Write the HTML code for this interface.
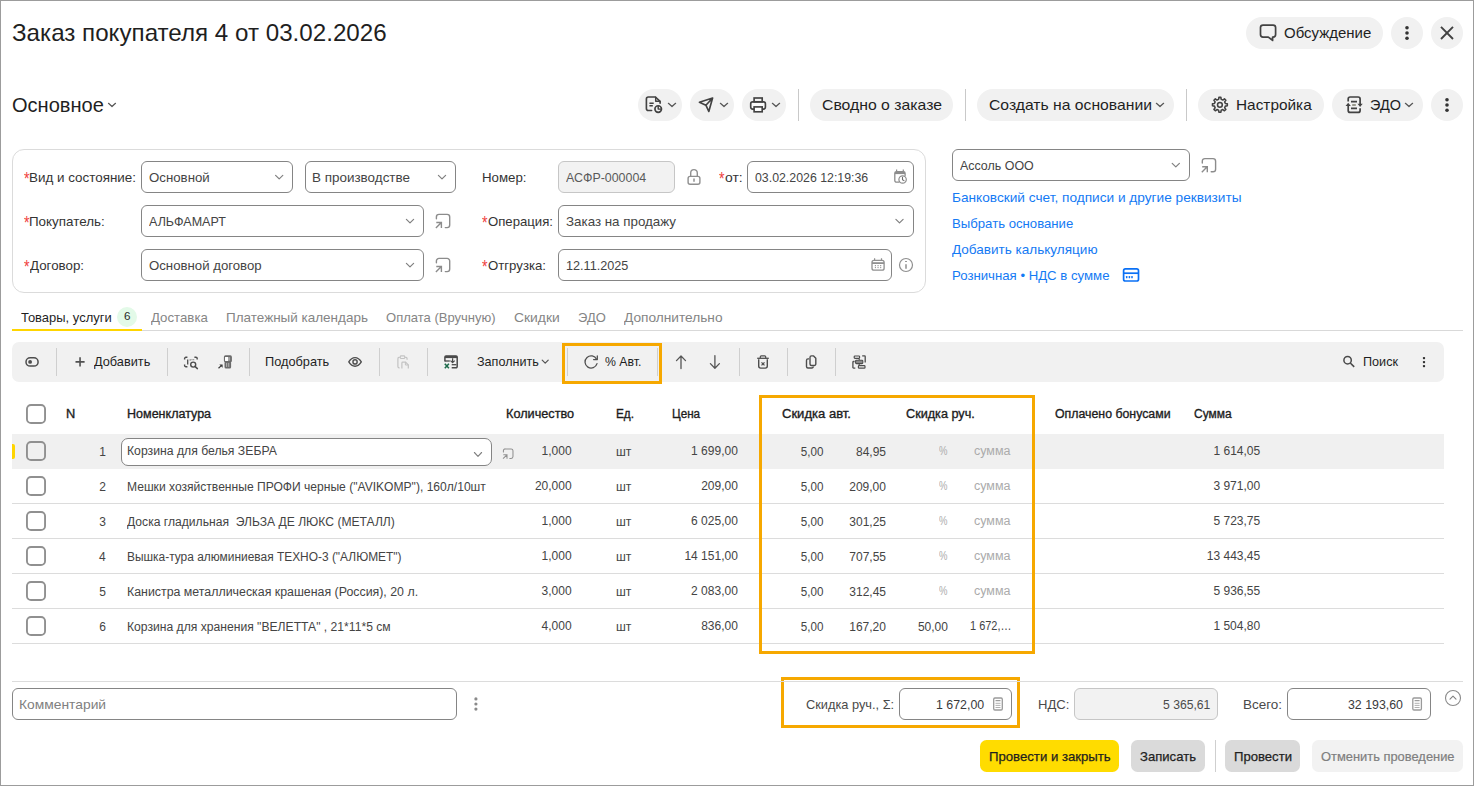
<!DOCTYPE html>
<html lang="ru"><head><meta charset="utf-8"><title>Заказ покупателя</title>
<style>
html,body{margin:0;padding:0;}
body{width:1474px;height:786px;position:relative;overflow:hidden;background:#fff;font-family:"Liberation Sans", sans-serif;}
.b{position:absolute;box-sizing:border-box;display:block;}
.t{position:absolute;white-space:pre;line-height:1;}
</style></head>
<body>
<div class="b" style="left:0px;top:0px;width:1474px;height:786px;border:1px solid #9c9c9c;"></div>
<div class="b" style="left:1246px;top:17px;width:137px;height:32px;background:#f1f1f1;border-radius:16px;"></div>
<div class="b" style="left:1391px;top:17px;width:32px;height:32px;background:#f1f1f1;border-radius:16px;"></div>
<div class="b" style="left:1431px;top:17px;width:32px;height:32px;background:#f1f1f1;border-radius:16px;"></div>
<div class="b" style="left:638px;top:89px;width:44px;height:32px;background:#f1f1f1;border-radius:16px;"></div>
<div class="b" style="left:690px;top:89px;width:44px;height:32px;background:#f1f1f1;border-radius:16px;"></div>
<div class="b" style="left:742px;top:89px;width:44px;height:32px;background:#f1f1f1;border-radius:16px;"></div>
<div class="b" style="left:810px;top:89px;width:143px;height:32px;background:#f1f1f1;border-radius:16px;"></div>
<div class="b" style="left:977px;top:89px;width:197px;height:32px;background:#f1f1f1;border-radius:16px;"></div>
<div class="b" style="left:1198px;top:89px;width:126px;height:32px;background:#f1f1f1;border-radius:16px;"></div>
<div class="b" style="left:1332px;top:89px;width:91px;height:32px;background:#f1f1f1;border-radius:16px;"></div>
<div class="b" style="left:1431px;top:89px;width:32px;height:32px;background:#f1f1f1;border-radius:16px;"></div>
<div class="b" style="left:798px;top:89px;width:1px;height:32px;background:#c9c9c9;"></div>
<div class="b" style="left:965px;top:89px;width:1px;height:32px;background:#c9c9c9;"></div>
<div class="b" style="left:1186px;top:89px;width:1px;height:32px;background:#c9c9c9;"></div>
<div class="b" style="left:12px;top:149px;width:914px;height:144px;border:1px solid #dbdbdb;border-radius:12px;"></div>
<div class="b" style="left:141px;top:161px;width:152px;height:32px;background:#fff;border:1px solid #858585;border-radius:6px;"></div>
<div class="b" style="left:305px;top:161px;width:151px;height:32px;background:#fff;border:1px solid #858585;border-radius:6px;"></div>
<div class="b" style="left:141px;top:205px;width:283px;height:32px;background:#fff;border:1px solid #858585;border-radius:6px;"></div>
<div class="b" style="left:141px;top:249px;width:283px;height:32px;background:#fff;border:1px solid #858585;border-radius:6px;"></div>
<div class="b" style="left:558px;top:161px;width:117px;height:32px;background:#f2f2f2;border:1px solid #c6c6c6;border-radius:6px;"></div>
<div class="b" style="left:747px;top:161px;width:167px;height:32px;background:#fff;border:1px solid #858585;border-radius:6px;"></div>
<div class="b" style="left:558px;top:205px;width:356px;height:32px;background:#fff;border:1px solid #858585;border-radius:6px;"></div>
<div class="b" style="left:558px;top:249px;width:334px;height:32px;background:#fff;border:1px solid #858585;border-radius:6px;"></div>
<div class="b" style="left:952px;top:149px;width:238px;height:32px;background:#fff;border:1px solid #858585;border-radius:6px;"></div>
<div class="b" style="left:12px;top:330px;width:1451px;height:1px;background:#d9d9d9;"></div>
<div class="b" style="left:12px;top:329px;width:130px;height:2px;background:#ffd500;"></div>
<div class="b" style="left:117px;top:307px;width:20px;height:20px;background:#e3fae8;border-radius:10px;"></div>
<div class="b" style="left:12px;top:342px;width:1432px;height:40px;background:#f1f1f1;border-radius:7px;"></div>
<div class="b" style="left:56px;top:348px;width:1px;height:28px;background:#cfcfcf;"></div>
<div class="b" style="left:167px;top:348px;width:1px;height:28px;background:#cfcfcf;"></div>
<div class="b" style="left:249px;top:348px;width:1px;height:28px;background:#cfcfcf;"></div>
<div class="b" style="left:379px;top:348px;width:1px;height:28px;background:#cfcfcf;"></div>
<div class="b" style="left:427px;top:348px;width:1px;height:28px;background:#cfcfcf;"></div>
<div class="b" style="left:567px;top:348px;width:1px;height:28px;background:#cfcfcf;"></div>
<div class="b" style="left:657px;top:348px;width:1px;height:28px;background:#cfcfcf;"></div>
<div class="b" style="left:739px;top:348px;width:1px;height:28px;background:#cfcfcf;"></div>
<div class="b" style="left:787px;top:348px;width:1px;height:28px;background:#cfcfcf;"></div>
<div class="b" style="left:835px;top:348px;width:1px;height:28px;background:#cfcfcf;"></div>
<div class="b" style="left:12px;top:434px;width:1432px;height:35px;background:#f0f0f0;"></div>
<div class="b" style="left:12px;top:444px;width:3px;height:15px;background:#ffd500;border-radius:0 2px 2px 0;"></div>
<div class="b" style="left:12px;top:503px;width:1432px;height:1px;background:#dcdcdc;"></div>
<div class="b" style="left:12px;top:538px;width:1432px;height:1px;background:#dcdcdc;"></div>
<div class="b" style="left:12px;top:573px;width:1432px;height:1px;background:#dcdcdc;"></div>
<div class="b" style="left:12px;top:608px;width:1432px;height:1px;background:#dcdcdc;"></div>
<div class="b" style="left:12px;top:643px;width:1432px;height:1px;background:#dcdcdc;"></div>
<div class="b" style="left:121px;top:438px;width:371px;height:28px;background:#fff;border:1px solid #858585;border-radius:7px;"></div>
<div class="b" style="left:562px;top:343px;width:100px;height:41px;border:3px solid #f6a800;"></div>
<div class="b" style="left:759px;top:395px;width:276px;height:259px;border:3px solid #f6a800;"></div>
<div class="b" style="left:781px;top:677px;width:239px;height:51px;border:3px solid #f6a800;"></div>
<div class="b" style="left:12px;top:681px;width:1451px;height:1px;background:#dcdcdc;"></div>
<div class="b" style="left:12px;top:688px;width:445px;height:32px;background:#fff;border:1px solid #858585;border-radius:6px;"></div>
<div class="b" style="left:899px;top:688px;width:113px;height:32px;background:#fff;border:1px solid #858585;border-radius:6px;"></div>
<div class="b" style="left:1074px;top:688px;width:144px;height:32px;background:#f2f2f2;border:1px solid #c6c6c6;border-radius:6px;"></div>
<div class="b" style="left:1287px;top:688px;width:144px;height:32px;background:#fff;border:1px solid #858585;border-radius:6px;"></div>
<div class="b" style="left:980px;top:740px;width:139px;height:32px;background:#ffdc00;border-radius:6.5px;"></div>
<div class="b" style="left:1131px;top:740px;width:74px;height:32px;background:#dadada;border-radius:6.5px;"></div>
<div class="b" style="left:1215px;top:740px;width:1px;height:32px;background:#cfcfcf;"></div>
<div class="b" style="left:1225px;top:740px;width:75px;height:32px;background:#dadada;border-radius:6.5px;"></div>
<div class="b" style="left:1312px;top:740px;width:151px;height:32px;background:#f2f2f2;border-radius:6.5px;"></div>
<svg class="b" style="left:0;top:0" width="1474" height="786" viewBox="0 0 1474 786" fill="none"><path d="M1263 25.1H1273.1A2.5 2.5 0 0 1 1275.6 27.6V34.6A2.5 2.5 0 0 1 1273.1 37.1H1272.6V40.4L1268.3 37.1H1263A2.5 2.5 0 0 1 1260.5 34.6V27.6A2.5 2.5 0 0 1 1263 25.1Z" stroke="#424242" stroke-width="1.7" fill="none" stroke-linecap="round" stroke-linejoin="round" /><circle cx="1407" cy="27.8" r="1.8" fill="#333"/><circle cx="1407" cy="33" r="1.8" fill="#333"/><circle cx="1407" cy="38.2" r="1.8" fill="#333"/><path d="M1441 26.9L1453 39M1453 26.9L1441 39" stroke="#424242" stroke-width="1.9" fill="none" stroke-linecap="butt" stroke-linejoin="round" /><path d="M651.6 110.5H648.4A2 2 0 0 1 646.4 108.5V99A2 2 0 0 1 648.4 97H655.4L660.1 101.3V103.2" stroke="#424242" stroke-width="1.65" fill="none" stroke-linecap="round" stroke-linejoin="round" /><path d="M655.7 97.3V101.3H659.8" stroke="#424242" stroke-width="1.45" fill="none" stroke-linecap="round" stroke-linejoin="round" /><path d="M649.4 103.3H653.7M649.4 105.7H652.8" stroke="#424242" stroke-width="1.55" fill="none" stroke-linecap="butt" stroke-linejoin="round" /><circle cx="658.2" cy="109.1" r="3.3" stroke="#424242" stroke-width="1.65" fill="none"/><path d="M658.2 106.5V109.1H660.8" stroke="#424242" stroke-width="1.45" fill="none" stroke-linecap="round" stroke-linejoin="round" /><path d="M668.4 103.30000000000001L672 106.5L675.6 103.30000000000001" stroke="#555" stroke-width="1.25" fill="none" stroke-linecap="round" stroke-linejoin="round" /><path d="M712.6 98L699.4 102.2L705.9 105.2L708.8 111.5Z M705.9 105.2L712.6 98" stroke="#424242" stroke-width="1.65" fill="none" stroke-linecap="round" stroke-linejoin="round" /><path d="M720.4 103.30000000000001L724 106.5L727.6 103.30000000000001" stroke="#555" stroke-width="1.25" fill="none" stroke-linecap="round" stroke-linejoin="round" /><rect x="750.7" y="101.8" width="14.7" height="7.3" rx="2" stroke="#424242" stroke-width="1.65" fill="#fafafa"/><rect x="754.1" y="98" width="8.1" height="3.8" stroke="#424242" stroke-width="1.65" fill="#f2f2f2"/><rect x="754.1" y="106.9" width="8.1" height="4.9" stroke="#424242" stroke-width="1.65" fill="#fff"/><path d="M772.4 103.30000000000001L776 106.5L779.6 103.30000000000001" stroke="#555" stroke-width="1.25" fill="none" stroke-linecap="round" stroke-linejoin="round" /><path d="M1156.4 103.30000000000001L1160 106.5L1163.6 103.30000000000001" stroke="#555" stroke-width="1.25" fill="none" stroke-linecap="round" stroke-linejoin="round" /><path d="M1218.90 97.37L1220.90 97.37L1221.21 99.35L1222.83 100.03L1224.45 98.84L1225.86 100.25L1224.67 101.87L1225.35 103.49L1227.33 103.80L1227.33 105.80L1225.35 106.11L1224.67 107.73L1225.86 109.35L1224.45 110.76L1222.83 109.57L1221.21 110.25L1220.90 112.23L1218.90 112.23L1218.59 110.25L1216.97 109.57L1215.35 110.76L1213.94 109.35L1215.13 107.73L1214.45 106.11L1212.47 105.80L1212.47 103.80L1214.45 103.49L1215.13 101.87L1213.94 100.25L1215.35 98.84L1216.97 100.03L1218.59 99.35Z" stroke="#424242" stroke-width="1.55" fill="none" stroke-linecap="round" stroke-linejoin="round" /><circle cx="1219.9" cy="104.8" r="2.4" stroke="#424242" stroke-width="1.55" fill="none"/><path d="M1348.2 101.4V99A2 2 0 0 1 1350.2 97H1358.1A2 2 0 0 1 1360.1 99V104.6" stroke="#424242" stroke-width="1.7" fill="none" stroke-linecap="butt" stroke-linejoin="round" /><path d="M1360.1 108.2V110.4A2 2 0 0 1 1358.1 112.4H1350.2A2 2 0 0 1 1348.2 110.4V105.2" stroke="#424242" stroke-width="1.7" fill="none" stroke-linecap="butt" stroke-linejoin="round" /><path d="M1357.5 103.8H1362.7L1360.1 106.9Z" fill="#424242"/><path d="M1345.6 105.9H1350.8L1348.2 102.8Z" fill="#424242"/><path d="M1351 101.7H1357M1351 108.3H1357" stroke="#424242" stroke-width="1.7" fill="none" stroke-linecap="butt" stroke-linejoin="round" /><path d="M1352.2 105H1355.8" stroke="#7d7d6c" stroke-width="1.5" fill="none" stroke-linecap="butt" stroke-linejoin="round" /><path d="M1405.4 103.30000000000001L1409 106.5L1412.6 103.30000000000001" stroke="#555" stroke-width="1.25" fill="none" stroke-linecap="round" stroke-linejoin="round" /><circle cx="1447" cy="99.8" r="1.8" fill="#333"/><circle cx="1447" cy="105" r="1.8" fill="#333"/><circle cx="1447" cy="110.2" r="1.8" fill="#333"/><path d="M108.5 103.30000000000001L112 106.5L115.5 103.30000000000001" stroke="#555" stroke-width="1.2" fill="none" stroke-linecap="round" stroke-linejoin="round" /><path d="M275.59999999999997 175.29999999999998L279.2 178.9L282.8 175.29999999999998" stroke="#808080" stroke-width="1.2" fill="none" stroke-linecap="round" stroke-linejoin="round" /><path d="M438.4 175.29999999999998L442 178.9L445.6 175.29999999999998" stroke="#808080" stroke-width="1.2" fill="none" stroke-linecap="round" stroke-linejoin="round" /><path d="M406.4 219.29999999999998L410 222.9L413.6 219.29999999999998" stroke="#808080" stroke-width="1.2" fill="none" stroke-linecap="round" stroke-linejoin="round" /><path d="M406.4 263.3L410 266.90000000000003L413.6 263.3" stroke="#808080" stroke-width="1.2" fill="none" stroke-linecap="round" stroke-linejoin="round" /><path d="M895.9 219.29999999999998L899.5 222.9L903.1 219.29999999999998" stroke="#808080" stroke-width="1.2" fill="none" stroke-linecap="round" stroke-linejoin="round" /><path d="M1172.2 163.29999999999998L1175.8 166.9L1179.3999999999999 163.29999999999998" stroke="#808080" stroke-width="1.2" fill="none" stroke-linecap="round" stroke-linejoin="round" /><path d="M436.4 218.8V217.0A2.6 2.6 0 0 1 439.0 214.4H447.1A2.6 2.6 0 0 1 449.7 217.0V225.0A2.6 2.6 0 0 1 447.1 227.6H445.3" stroke="#8c8c8c" stroke-width="1.4" fill="none" stroke-linecap="round" stroke-linejoin="round" /><path d="M435.9 228.0L441.3 222.6M436.3 222.5H441.4V228.0" stroke="#8c8c8c" stroke-width="1.4" fill="none" stroke-linecap="butt" stroke-linejoin="miter" /><path d="M436.4 262.8V261.0A2.6 2.6 0 0 1 439.0 258.4H447.1A2.6 2.6 0 0 1 449.7 261.0V269.0A2.6 2.6 0 0 1 447.1 271.6H445.3" stroke="#8c8c8c" stroke-width="1.4" fill="none" stroke-linecap="round" stroke-linejoin="round" /><path d="M435.9 272.0L441.3 266.6M436.3 266.5H441.4V272.0" stroke="#8c8c8c" stroke-width="1.4" fill="none" stroke-linecap="butt" stroke-linejoin="miter" /><path d="M1202.3 163.0V161.2A2.6 2.6 0 0 1 1204.9 158.6H1213.0A2.6 2.6 0 0 1 1215.6 161.2V169.2A2.6 2.6 0 0 1 1213.0 171.8H1211.2" stroke="#8c8c8c" stroke-width="1.4" fill="none" stroke-linecap="round" stroke-linejoin="round" /><path d="M1201.8 172.2L1207.2 166.8M1202.2 166.7H1207.3V172.2" stroke="#8c8c8c" stroke-width="1.4" fill="none" stroke-linecap="butt" stroke-linejoin="miter" /><rect x="688.1" y="176.4" width="11.8" height="7.9" rx="2" stroke="#8f8f8f" stroke-width="1.4" fill="none"/><path d="M690.7 176.4V172.9A3.3 3.3 0 0 1 697.3 172.9V176.4" stroke="#8f8f8f" stroke-width="1.4" fill="none" stroke-linecap="butt" stroke-linejoin="round" /><path d="M694 178.6V181.8" stroke="#8f8f8f" stroke-width="1.5" fill="none" stroke-linecap="butt" stroke-linejoin="round" /><path d="M899 182.2H896.6A1.8 1.8 0 0 1 894.8 180.4V173.4A1.8 1.8 0 0 1 896.6 171.6H903.3A1.8 1.8 0 0 1 905.1 173.4V175.6" stroke="#8c8c8c" stroke-width="1.3" fill="none" stroke-linecap="round" stroke-linejoin="round" /><path d="M894.8 173H905.1" stroke="#8c8c8c" stroke-width="2.2" fill="none" stroke-linecap="butt" stroke-linejoin="round" /><path d="M896.6 169.5V171.5M903.3 169.5V171.5" stroke="#8c8c8c" stroke-width="1.2" fill="none" stroke-linecap="butt" stroke-linejoin="round" /><circle cx="902.6" cy="179.5" r="3.7" stroke="#8c8c8c" stroke-width="1.2" fill="#fff"/><path d="M902.5 177.3V179.7L904 180.6" stroke="#6c6c6c" stroke-width="1.1" fill="none" stroke-linecap="round" stroke-linejoin="round" /><rect x="872" y="260.4" width="12.1" height="9.8" rx="2" stroke="#909090" stroke-width="1.3" fill="none"/><path d="M872 263.1H884.1" stroke="#909090" stroke-width="1.8" fill="none" stroke-linecap="butt" stroke-linejoin="round" /><path d="M874.6 258.3V260.3M881.5 258.3V260.3" stroke="#909090" stroke-width="1.2" fill="none" stroke-linecap="butt" stroke-linejoin="round" /><circle cx="875.4" cy="265.7" r="0.65" fill="#8a8a8a"/><circle cx="878.05" cy="265.7" r="0.65" fill="#8a8a8a"/><circle cx="880.7" cy="265.7" r="0.65" fill="#8a8a8a"/><circle cx="875.4" cy="267.6" r="0.65" fill="#8a8a8a"/><circle cx="878.05" cy="267.6" r="0.65" fill="#8a8a8a"/><circle cx="880.7" cy="267.6" r="0.65" fill="#8a8a8a"/><circle cx="906" cy="265" r="6.5" stroke="#8f8f8f" stroke-width="1.2" fill="none"/><path d="M906 264.3V268.8" stroke="#8f8f8f" stroke-width="1.5" fill="none" stroke-linecap="butt" stroke-linejoin="round" /><path d="M905.1 261.5H906.9" stroke="#8f8f8f" stroke-width="1.2" fill="none" stroke-linecap="butt" stroke-linejoin="round" /><rect x="1123.6" y="268.9" width="14.9" height="12.1" rx="1.8" stroke="#0a70f5" stroke-width="1.7" fill="none"/><path d="M1123.6 273.2H1138.5" stroke="#0a70f5" stroke-width="1.7" fill="none" stroke-linecap="butt" stroke-linejoin="round" /><rect x="1125.95" y="276" width="1.5" height="2.3" rx="0.6" fill="#0a70f5"/><rect x="1128.65" y="276" width="1.5" height="2.3" rx="0.6" fill="#0a70f5"/><rect x="1131.25" y="276" width="1.5" height="2.3" rx="0.6" fill="#0a70f5"/><rect x="26" y="357.7" width="12.1" height="8.4" rx="4.2" stroke="#4d4d4d" stroke-width="1.5" fill="none"/><circle cx="30.1" cy="361.9" r="1.9" fill="#4d4d4d"/><path d="M75.5 361.9H84.6M80.05 357.3V366.5" stroke="#505050" stroke-width="1.6" fill="none" stroke-linecap="butt" stroke-linejoin="round" /><path d="M184.6 359.6V358.6A1.3 1.3 0 0 1 185.9 357.3H187.4 M194.4 357.3H195.9A1.3 1.3 0 0 1 197.2 358.6V359.6 M184.6 364.4V365.4A1.3 1.3 0 0 0 185.9 366.7H187.4" stroke="#4d4d4d" stroke-width="1.4" fill="none" stroke-linecap="butt" stroke-linejoin="round" /><path d="M187.7 359.4V364.6" stroke="#4d4d4d" stroke-width="1.3" fill="none" stroke-linecap="butt" stroke-linejoin="round" /><path d="M190.2 359.3V360.6M192 359.3V360.2M193.7 359.3V360.2" stroke="#4d4d4d" stroke-width="0.9" fill="none" stroke-linecap="butt" stroke-linejoin="round" /><circle cx="193.2" cy="364.6" r="2.5" stroke="#4d4d4d" stroke-width="1.4" fill="none"/><path d="M195.2 366.6L197.4 368.6" stroke="#4d4d4d" stroke-width="1.5" fill="none" stroke-linecap="round" stroke-linejoin="round" /><rect x="223.9" y="355.3" width="8" height="7" rx="1.6" fill="#6a6a6a"/><rect x="224.5" y="361.2" width="6.6" height="7.3" rx="1.5" fill="#6a6a6a"/><rect x="225" y="356.9" width="3.4" height="4.1" rx="0.4" fill="#fff"/><rect x="229.3" y="357.1" width="0.8" height="3.6" fill="#bdbdbd"/><rect x="226.3" y="362.9" width="0.8" height="4" fill="#c8c8c8"/><rect x="228.4" y="362.9" width="0.8" height="4" fill="#c8c8c8"/><path d="M218.5 368.3L221.3 365.6" stroke="#3a3a3a" stroke-width="1.2" fill="none" stroke-linecap="butt" stroke-linejoin="round" /><path d="M219.3 364.5H222.6V367.8Z" fill="#3a3a3a"/><path d="M348.8 361.9C350.6 358.9 352.7 357.6 355.05 357.6S359.5 358.9 361.3 361.9C359.5 364.9 357.4 366.2 355.05 366.2S350.6 364.9 348.8 361.9Z" stroke="#4d4d4d" stroke-width="1.4" fill="none" stroke-linecap="round" stroke-linejoin="round" /><circle cx="355.05" cy="361.9" r="2.1" stroke="#4d4d4d" stroke-width="1.4" fill="none"/><path d="M399.8 357.4H399A1.3 1.3 0 0 0 397.9 358.7V366.6A1.3 1.3 0 0 0 399.2 367.9H399.6 M405.1 357.4H405.9A1.3 1.3 0 0 1 407.1 358.7V359.8" stroke="#c3c3c3" stroke-width="1.2" fill="none" stroke-linecap="butt" stroke-linejoin="round" /><rect x="400.3" y="355.9" width="4.4" height="2.6" rx="0.8" stroke="#c3c3c3" stroke-width="1.1" fill="none"/><path d="M401.9 368.4V362.9A0.8 0.8 0 0 1 402.7 362.1H405.6L408.3 364.8V368.4" stroke="#c3c3c3" stroke-width="1.2" fill="none" stroke-linecap="butt" stroke-linejoin="round" /><path d="M405.4 362.3V365H408.1" stroke="#c3c3c3" stroke-width="1" fill="none" stroke-linecap="round" stroke-linejoin="round" /><path d="M444.9 361.4V357.2A1.2 1.2 0 0 1 446.1 356H456A1.2 1.2 0 0 1 457.2 357.2V366.6A1.2 1.2 0 0 1 456 367.8H451.7" stroke="#4a4a4a" stroke-width="1.5" fill="none" stroke-linecap="butt" stroke-linejoin="round" /><path d="M444.9 357H457.2" stroke="#4a4a4a" stroke-width="2.2" fill="none" stroke-linecap="butt" stroke-linejoin="round" /><path d="M444.9 361H449.8" stroke="#4a4a4a" stroke-width="1.3" fill="none" stroke-linecap="butt" stroke-linejoin="round" /><path d="M452.6 358.3V362.4M450.5 360.6L452.6 362.6L454.7 360.6" stroke="#4a4a4a" stroke-width="1.2" fill="none" stroke-linecap="butt" stroke-linejoin="round" /><path d="M451.7 364.7H456.4" stroke="#4a4a4a" stroke-width="1.3" fill="none" stroke-linecap="butt" stroke-linejoin="round" /><path d="M444.8 363.7L448.9 368.3M448.9 363.7L444.8 368.3" stroke="#1d6b4b" stroke-width="1.5" fill="none" stroke-linecap="butt" stroke-linejoin="round" /><path d="M542.2 360.1L545.2 363.1L548.2 360.1" stroke="#555" stroke-width="1.25" fill="none" stroke-linecap="round" stroke-linejoin="round" /><path d="M596.6 359.2A6.1 6.1 0 1 0 597 363.6" stroke="#505050" stroke-width="1.3" fill="none" stroke-linecap="round" stroke-linejoin="round" /><path d="M597.3 355.9V359.6H593.6" stroke="#505050" stroke-width="1.3" fill="none" stroke-linecap="round" stroke-linejoin="round" /><path d="M681 368.6V356.2M676.5 360.6L681 356L685.5 360.6" stroke="#555" stroke-width="1.3" fill="none" stroke-linecap="round" stroke-linejoin="round" /><path d="M714.9 355.6V368M710.4 363.6L714.9 368.2L719.4 363.6" stroke="#555" stroke-width="1.3" fill="none" stroke-linecap="round" stroke-linejoin="round" /><path d="M757.2 358.3H768.8" stroke="#4d4d4d" stroke-width="1.3" fill="none" stroke-linecap="butt" stroke-linejoin="round" /><path d="M760.3 358V356.8A1 1 0 0 1 761.3 355.8H764.7A1 1 0 0 1 765.7 356.8V358" stroke="#4d4d4d" stroke-width="1.2" fill="none" stroke-linecap="butt" stroke-linejoin="round" /><path d="M758.7 359.2V366.1A2 2 0 0 0 760.7 368.1H765.3A2 2 0 0 0 767.3 366.1V359.2" stroke="#4d4d4d" stroke-width="1.4" fill="none" stroke-linecap="butt" stroke-linejoin="round" /><path d="M761.5 362.3L764.5 365.3M764.5 362.3L761.5 365.3" stroke="#4d4d4d" stroke-width="1.2" fill="none" stroke-linecap="butt" stroke-linejoin="round" /><path d="M809 358.9H808A1.5 1.5 0 0 0 806.5 360.4V366.5A1.5 1.5 0 0 0 808 368H812A1.5 1.5 0 0 0 813.3 366.5" stroke="#4d4d4d" stroke-width="1.4" fill="none" stroke-linecap="butt" stroke-linejoin="round" /><path d="M811.5 355.9H813.6L815.8 358.2V364A1.5 1.5 0 0 1 814.3 365.5H811.5A1.5 1.5 0 0 1 810 364V357.4A1.5 1.5 0 0 1 811.5 355.9Z" stroke="#4d4d4d" stroke-width="1.4" fill="none" stroke-linecap="round" stroke-linejoin="round" /><path d="M854.6 361.5H853.6A0.7 0.7 0 0 0 852.9 362.2V367.4A0.7 0.7 0 0 0 853.6 368.1H855.3 M862.2 355.9H864.5A0.7 0.7 0 0 1 865.2 356.6V362.6" stroke="#4d4d4d" stroke-width="1.3" fill="none" stroke-linecap="butt" stroke-linejoin="round" /><rect x="854.2" y="356.0" width="5.4" height="2.4" rx="0.8" stroke="#4d4d4d" stroke-width="1.2" fill="none"/><rect x="855.6" y="360.2" width="7.2" height="3.4" rx="0.8" fill="#8a8a8a" stroke="#4d4d4d" stroke-width="1.1"/><rect x="858.4" y="365.6" width="6.6" height="2.6" rx="0.8" stroke="#4d4d4d" stroke-width="1.2" fill="none"/><path d="M859.2 358.6V360M859.2 363.8V365.4" stroke="#4d4d4d" stroke-width="1.1" fill="none" stroke-linecap="butt" stroke-linejoin="round" /><circle cx="1347.6" cy="360.2" r="3.7" stroke="#4a4a4a" stroke-width="1.5" fill="none"/><path d="M1350.3 363L1354.2 366.9" stroke="#4a4a4a" stroke-width="1.6" fill="none" stroke-linecap="butt" stroke-linejoin="round" /><rect x="1422.85" y="356.95000000000005" width="2.3" height="2.3" rx="0.9" fill="#333"/><rect x="1422.85" y="360.95000000000005" width="2.3" height="2.3" rx="0.9" fill="#333"/><rect x="1422.85" y="364.95000000000005" width="2.3" height="2.3" rx="0.9" fill="#333"/><path d="M474.4 452.5L478 456.29999999999995L481.6 452.5" stroke="#808080" stroke-width="1.1" fill="none" stroke-linecap="round" stroke-linejoin="round" /><path d="M503.4 452.07V450.77A1.8719999999999999 1.8719999999999999 0 0 1 505.28 448.9H511.11A1.8719999999999999 1.8719999999999999 0 0 1 512.98 450.77V456.53A1.8719999999999999 1.8719999999999999 0 0 1 511.11 458.4H509.81" stroke="#909090" stroke-width="1.05" fill="none" stroke-linecap="round" stroke-linejoin="round" /><path d="M503.04 458.69L506.93 454.8M503.33 454.73H507.0V458.69" stroke="#909090" stroke-width="1.05" fill="none" stroke-linecap="butt" stroke-linejoin="miter" /><rect x="26.95" y="404.95" width="18.1" height="18.1" rx="4.1" stroke="#909090" stroke-width="1.9" fill="#fff"/><rect x="26.95" y="441.95" width="18.1" height="18.1" rx="4.1" stroke="#909090" stroke-width="1.9" fill="#f0f0f0"/><rect x="26.95" y="476.95" width="18.1" height="18.1" rx="4.1" stroke="#909090" stroke-width="1.9" fill="#fff"/><rect x="26.95" y="511.95" width="18.1" height="18.1" rx="4.1" stroke="#909090" stroke-width="1.9" fill="#fff"/><rect x="26.95" y="546.95" width="18.1" height="18.1" rx="4.1" stroke="#909090" stroke-width="1.9" fill="#fff"/><rect x="26.95" y="581.95" width="18.1" height="18.1" rx="4.1" stroke="#909090" stroke-width="1.9" fill="#fff"/><rect x="26.95" y="616.95" width="18.1" height="18.1" rx="4.1" stroke="#909090" stroke-width="1.9" fill="#fff"/><circle cx="475.9" cy="698.95" r="1.6" fill="#8a8a8a"/><circle cx="475.9" cy="704" r="1.6" fill="#8a8a8a"/><circle cx="475.9" cy="709.05" r="1.6" fill="#8a8a8a"/><rect x="993.7" y="698" width="8.6" height="12" rx="1.2" stroke="#9a9a9a" stroke-width="1.3" fill="#fff"/><path d="M995.5 700.7H1000.5" stroke="#858585" stroke-width="1.0" fill="none" stroke-linecap="butt" stroke-linejoin="round" /><path d="M995.5 703.3H1000.5M995.5 705.4H1000.5M995.5 707.5H1000.5" stroke="#a8a8a8" stroke-width="0.9" fill="none" stroke-linecap="butt" stroke-linejoin="round" /><rect x="1412.8" y="698" width="8.6" height="12" rx="1.2" stroke="#9a9a9a" stroke-width="1.3" fill="#fff"/><path d="M1414.6 700.7H1419.6" stroke="#858585" stroke-width="1.0" fill="none" stroke-linecap="butt" stroke-linejoin="round" /><path d="M1414.6 703.3H1419.6M1414.6 705.4H1419.6M1414.6 707.5H1419.6" stroke="#a8a8a8" stroke-width="0.9" fill="none" stroke-linecap="butt" stroke-linejoin="round" /><circle cx="1453" cy="698" r="7.5" stroke="#8a8a8a" stroke-width="1.1" fill="none"/><path d="M1450.0 699.2L1453 696.2L1456.0 699.2" stroke="#808080" stroke-width="1.1" fill="none" stroke-linecap="round" stroke-linejoin="round" /></svg>
<span class="t" style="top:21px;font-size:24px;color:#1f1f1f;left:11.64px;transform-origin:0 0;transform:scaleX(1.0068);">Заказ покупателя 4 от 03.02.2026</span>
<span class="t" style="top:25px;font-size:15px;color:#1f1f1f;left:1284.10px;transform-origin:0 0;transform:scaleX(0.9979);">Обсуждение</span>
<span class="t" style="top:96px;font-size:19.5px;color:#1f1f1f;left:12.06px;transform-origin:0 0;transform:scaleX(1.0280);">Основное</span>
<span class="t" style="top:97px;font-size:15px;color:#1f1f1f;left:821.86px;transform-origin:0 0;transform:scaleX(1.0521);">Сводно о заказе</span>
<span class="t" style="top:97px;font-size:15px;color:#1f1f1f;left:988.76px;transform-origin:0 0;transform:scaleX(1.0472);">Создать на основании</span>
<span class="t" style="top:97px;font-size:15px;color:#1f1f1f;left:1235.60px;transform-origin:0 0;transform:scaleX(1.0252);">Настройка</span>
<span class="t" style="top:97px;font-size:15px;color:#1f1f1f;left:1370.22px;transform-origin:0 0;transform:scaleX(0.9625);">ЭДО</span>
<span class="t" style="top:170px;font-size:18px;color:#f03e3e;left:23.68px;transform-origin:0 0;transform:scaleX(0.7884);">*</span>
<span class="t" style="top:214px;font-size:18px;color:#f03e3e;left:23.68px;transform-origin:0 0;transform:scaleX(0.7884);">*</span>
<span class="t" style="top:258px;font-size:18px;color:#f03e3e;left:23.68px;transform-origin:0 0;transform:scaleX(0.7884);">*</span>
<span class="t" style="top:171px;font-size:13px;color:#343434;left:29.25px;transform-origin:0 0;transform:scaleX(1.0310);">Вид и состояние:</span>
<span class="t" style="top:215px;font-size:13px;color:#343434;left:29.25px;transform-origin:0 0;transform:scaleX(1.0298);">Покупатель:</span>
<span class="t" style="top:259px;font-size:13px;color:#343434;left:30.00px;transform-origin:0 0;transform:scaleX(1.0248);">Договор:</span>
<span class="t" style="top:171px;font-size:13px;color:#444444;left:148.88px;transform-origin:0 0;transform:scaleX(1.0184);">Основной</span>
<span class="t" style="top:171px;font-size:13px;color:#444444;left:312.25px;transform-origin:0 0;transform:scaleX(1.0344);">В производстве</span>
<span class="t" style="top:215px;font-size:13px;color:#444444;left:149.30px;transform-origin:0 0;transform:scaleX(0.9636);">АЛЬФАМАРТ</span>
<span class="t" style="top:259px;font-size:13px;color:#444444;left:148.88px;transform-origin:0 0;transform:scaleX(1.0155);">Основной договор</span>
<span class="t" style="top:171px;font-size:13px;color:#343434;left:481.66px;transform-origin:0 0;transform:scaleX(1.0208);">Номер:</span>
<span class="t" style="top:171px;font-size:13px;color:#5a5a5a;left:566.10px;transform-origin:0 0;transform:scaleX(0.9545);">АСФР-000004</span>
<span class="t" style="top:214px;font-size:18px;color:#f03e3e;left:481.98px;transform-origin:0 0;transform:scaleX(0.7884);">*</span>
<span class="t" style="top:258px;font-size:18px;color:#f03e3e;left:481.98px;transform-origin:0 0;transform:scaleX(0.7884);">*</span>
<span class="t" style="top:215px;font-size:13px;color:#343434;left:487.98px;transform-origin:0 0;transform:scaleX(1.0126);">Операция:</span>
<span class="t" style="top:259px;font-size:13px;color:#343434;left:487.98px;transform-origin:0 0;transform:scaleX(1.0147);">Отгрузка:</span>
<span class="t" style="top:215px;font-size:13px;color:#444444;left:565.88px;transform-origin:0 0;transform:scaleX(1.0272);">Заказ на продажу</span>
<span class="t" style="top:259px;font-size:13px;color:#444444;left:566.21px;transform-origin:0 0;transform:scaleX(0.9736);">12.11.2025</span>
<span class="t" style="top:170px;font-size:18px;color:#f03e3e;left:718.98px;transform-origin:0 0;transform:scaleX(0.7884);">*</span>
<span class="t" style="top:171px;font-size:13px;color:#343434;left:724.56px;transform-origin:0 0;transform:scaleX(1.0717);">от:</span>
<span class="t" style="top:171px;font-size:13px;color:#444444;left:755.31px;transform-origin:0 0;transform:scaleX(0.9489);">03.02.2026 12:19:36</span>
<span class="t" style="top:159px;font-size:13px;color:#444444;left:960.20px;transform-origin:0 0;transform:scaleX(0.9568);">Ассоль ООО</span>
<span class="t" style="top:191px;font-size:13px;color:#147af4;left:951.73px;transform-origin:0 0;transform:scaleX(1.0501);">Банковский счет, подписи и другие реквизиты</span>
<span class="t" style="top:217px;font-size:13px;color:#147af4;left:951.77px;transform-origin:0 0;transform:scaleX(1.0124);">Выбрать основание</span>
<span class="t" style="top:243px;font-size:13px;color:#147af4;left:952.30px;transform-origin:0 0;transform:scaleX(1.0413);">Добавить калькуляцию</span>
<span class="t" style="top:269px;font-size:13px;color:#147af4;left:951.77px;transform-origin:0 0;transform:scaleX(1.0143);">Розничная • НДС в сумме</span>
<span class="t" style="top:311px;font-size:13px;color:#1f1f1f;left:21.10px;transform-origin:0 0;transform:scaleX(0.9975);">Товары, услуги</span>
<span class="t" style="top:311px;font-size:11px;color:#2a2a2a;left:123.92px;transform-origin:0 0;transform:scaleX(1.0588);">6</span>
<span class="t" style="top:311px;font-size:13px;color:#858585;left:151.40px;transform-origin:0 0;transform:scaleX(1.0177);">Доставка</span>
<span class="t" style="top:311px;font-size:13px;color:#858585;left:226.15px;transform-origin:0 0;transform:scaleX(1.0371);">Платежный календарь</span>
<span class="t" style="top:311px;font-size:13px;color:#858585;left:385.99px;transform-origin:0 0;transform:scaleX(1.0022);">Оплата (Вручную)</span>
<span class="t" style="top:311px;font-size:13px;color:#858585;left:513.95px;transform-origin:0 0;transform:scaleX(1.0674);">Скидки</span>
<span class="t" style="top:311px;font-size:13px;color:#858585;left:578.09px;transform-origin:0 0;transform:scaleX(0.9980);">ЭДО</span>
<span class="t" style="top:311px;font-size:13px;color:#858585;left:624.00px;transform-origin:0 0;transform:scaleX(1.0533);">Дополнительно</span>
<span class="t" style="top:355px;font-size:13px;color:#1f1f1f;left:94.20px;transform-origin:0 0;transform:scaleX(0.9794);">Добавить</span>
<span class="t" style="top:355px;font-size:13px;color:#1f1f1f;left:264.50px;transform-origin:0 0;transform:scaleX(0.9819);">Подобрать</span>
<span class="t" style="top:355px;font-size:13px;color:#1f1f1f;left:476.91px;transform-origin:0 0;transform:scaleX(0.9692);">Заполнить</span>
<span class="t" style="top:355px;font-size:13px;color:#1f1f1f;left:605.12px;transform-origin:0 0;transform:scaleX(0.9458);">% Авт.</span>
<span class="t" style="top:355px;font-size:13px;color:#1f1f1f;left:1362.51px;transform-origin:0 0;transform:scaleX(0.9713);">Поиск</span>
<span class="t" style="top:408px;font-size:12px;color:#1c1c1c;-webkit-text-stroke:0.33px #1c1c1c;left:66.04px;transform-origin:0 0;transform:scaleX(1.0667);">N</span>
<span class="t" style="top:408px;font-size:12px;color:#1c1c1c;-webkit-text-stroke:0.33px #1c1c1c;left:126.96px;transform-origin:0 0;transform:scaleX(1.0439);">Номенклатура</span>
<span class="t" style="top:408px;font-size:12px;color:#1c1c1c;-webkit-text-stroke:0.33px #1c1c1c;left:505.85px;transform-origin:0 0;transform:scaleX(1.0568);">Количество</span>
<span class="t" style="top:408px;font-size:12px;color:#1c1c1c;-webkit-text-stroke:0.33px #1c1c1c;left:615.52px;transform-origin:0 0;transform:scaleX(0.9812);">Ед.</span>
<span class="t" style="top:408px;font-size:12px;color:#1c1c1c;-webkit-text-stroke:0.33px #1c1c1c;left:672.12px;transform-origin:0 0;transform:scaleX(0.9739);">Цена</span>
<span class="t" style="top:408px;font-size:12px;color:#1c1c1c;-webkit-text-stroke:0.33px #1c1c1c;left:782.40px;transform-origin:0 0;transform:scaleX(1.0867);">Скидка авт.</span>
<span class="t" style="top:408px;font-size:12px;color:#1c1c1c;-webkit-text-stroke:0.33px #1c1c1c;left:906.22px;transform-origin:0 0;transform:scaleX(1.0537);">Скидка руч.</span>
<span class="t" style="top:408px;font-size:12px;color:#1c1c1c;-webkit-text-stroke:0.33px #1c1c1c;left:1054.58px;transform-origin:0 0;transform:scaleX(1.0277);">Оплачено бонусами</span>
<span class="t" style="top:408px;font-size:12px;color:#1c1c1c;-webkit-text-stroke:0.33px #1c1c1c;left:1194.45px;transform-origin:0 0;transform:scaleX(0.9965);">Сумма</span>
<span class="t" style="top:446px;font-size:12px;color:#444444;right:1368.03px;transform-origin:100% 0;">1</span>
<span class="t" style="top:445px;font-size:12px;color:#444444;left:126.73px;transform-origin:0 0;transform:scaleX(1.0174);">Корзина для белья ЗЕБРА</span>
<span class="t" style="top:445px;font-size:12px;color:#444444;right:902.38px;transform-origin:100% 0;">1,000</span>
<span class="t" style="top:446px;font-size:12px;color:#444444;left:616.18px;transform-origin:0 0;transform:scaleX(1.0193);">шт</span>
<span class="t" style="top:445px;font-size:12px;color:#444444;right:736.18px;transform-origin:100% 0;">1 699,00</span>
<span class="t" style="top:446px;font-size:12px;color:#444444;right:650.59px;transform-origin:100% 0;transform:scaleX(0.9700);">5,00</span>
<span class="t" style="top:446px;font-size:12px;color:#444444;right:588.03px;transform-origin:100% 0;">84,95</span>
<span class="t" style="top:445px;font-size:12px;color:#ababab;left:939.38px;transform-origin:0 0;transform:scaleX(0.7919);">%</span>
<span class="t" style="top:445px;font-size:12px;color:#ababab;left:973.78px;transform-origin:0 0;transform:scaleX(1.0415);">сумма</span>
<span class="t" style="top:445px;font-size:12px;color:#444444;right:213.83px;transform-origin:100% 0;">1 614,05</span>
<span class="t" style="top:481px;font-size:12px;color:#444444;right:1368.03px;transform-origin:100% 0;">2</span>
<span class="t" style="top:481px;font-size:12px;color:#444444;left:126.74px;transform-origin:0 0;transform:scaleX(1.0064);">Мешки хозяйственные ПРОФИ черные ("AVIKOMP"), 160л/10шт</span>
<span class="t" style="top:480px;font-size:12px;color:#444444;right:902.38px;transform-origin:100% 0;">20,000</span>
<span class="t" style="top:481px;font-size:12px;color:#444444;left:616.18px;transform-origin:0 0;transform:scaleX(1.0193);">шт</span>
<span class="t" style="top:480px;font-size:12px;color:#444444;right:736.18px;transform-origin:100% 0;">209,00</span>
<span class="t" style="top:481px;font-size:12px;color:#444444;right:650.59px;transform-origin:100% 0;transform:scaleX(0.9700);">5,00</span>
<span class="t" style="top:481px;font-size:12px;color:#444444;right:588.08px;transform-origin:100% 0;">209,00</span>
<span class="t" style="top:480px;font-size:12px;color:#ababab;left:939.38px;transform-origin:0 0;transform:scaleX(0.7919);">%</span>
<span class="t" style="top:480px;font-size:12px;color:#ababab;left:973.78px;transform-origin:0 0;transform:scaleX(1.0415);">сумма</span>
<span class="t" style="top:480px;font-size:12px;color:#444444;right:213.88px;transform-origin:100% 0;">3 971,00</span>
<span class="t" style="top:516px;font-size:12px;color:#444444;right:1368.08px;transform-origin:100% 0;">3</span>
<span class="t" style="top:516px;font-size:12px;color:#444444;left:126.85px;transform-origin:0 0;transform:scaleX(1.0094);">Доска гладильная  ЭЛЬЗА ДЕ ЛЮКС (МЕТАЛЛ)</span>
<span class="t" style="top:515px;font-size:12px;color:#444444;right:902.38px;transform-origin:100% 0;">1,000</span>
<span class="t" style="top:516px;font-size:12px;color:#444444;left:616.18px;transform-origin:0 0;transform:scaleX(1.0193);">шт</span>
<span class="t" style="top:515px;font-size:12px;color:#444444;right:736.18px;transform-origin:100% 0;">6 025,00</span>
<span class="t" style="top:516px;font-size:12px;color:#444444;right:650.59px;transform-origin:100% 0;transform:scaleX(0.9700);">5,00</span>
<span class="t" style="top:516px;font-size:12px;color:#444444;right:588.03px;transform-origin:100% 0;">301,25</span>
<span class="t" style="top:515px;font-size:12px;color:#ababab;left:939.38px;transform-origin:0 0;transform:scaleX(0.7919);">%</span>
<span class="t" style="top:515px;font-size:12px;color:#ababab;left:973.78px;transform-origin:0 0;transform:scaleX(1.0415);">сумма</span>
<span class="t" style="top:515px;font-size:12px;color:#444444;right:213.83px;transform-origin:100% 0;">5 723,75</span>
<span class="t" style="top:551px;font-size:12px;color:#444444;right:1368.28px;transform-origin:100% 0;">4</span>
<span class="t" style="top:551px;font-size:12px;color:#444444;left:126.76px;transform-origin:0 0;transform:scaleX(0.9936);">Вышка-тура алюминиевая ТЕХНО-3 ("АЛЮМЕТ")</span>
<span class="t" style="top:550px;font-size:12px;color:#444444;right:902.38px;transform-origin:100% 0;">1,000</span>
<span class="t" style="top:551px;font-size:12px;color:#444444;left:616.18px;transform-origin:0 0;transform:scaleX(1.0193);">шт</span>
<span class="t" style="top:550px;font-size:12px;color:#444444;right:736.18px;transform-origin:100% 0;">14 151,00</span>
<span class="t" style="top:551px;font-size:12px;color:#444444;right:650.59px;transform-origin:100% 0;transform:scaleX(0.9700);">5,00</span>
<span class="t" style="top:551px;font-size:12px;color:#444444;right:588.03px;transform-origin:100% 0;">707,55</span>
<span class="t" style="top:550px;font-size:12px;color:#ababab;left:939.38px;transform-origin:0 0;transform:scaleX(0.7919);">%</span>
<span class="t" style="top:550px;font-size:12px;color:#ababab;left:973.78px;transform-origin:0 0;transform:scaleX(1.0415);">сумма</span>
<span class="t" style="top:550px;font-size:12px;color:#444444;right:213.83px;transform-origin:100% 0;">13 443,45</span>
<span class="t" style="top:586px;font-size:12px;color:#444444;right:1368.13px;transform-origin:100% 0;">5</span>
<span class="t" style="top:586px;font-size:12px;color:#444444;left:126.72px;transform-origin:0 0;transform:scaleX(1.0306);">Канистра металлическая крашеная (Россия), 20 л.</span>
<span class="t" style="top:585px;font-size:12px;color:#444444;right:902.38px;transform-origin:100% 0;">3,000</span>
<span class="t" style="top:586px;font-size:12px;color:#444444;left:616.18px;transform-origin:0 0;transform:scaleX(1.0193);">шт</span>
<span class="t" style="top:585px;font-size:12px;color:#444444;right:736.18px;transform-origin:100% 0;">2 083,00</span>
<span class="t" style="top:586px;font-size:12px;color:#444444;right:650.59px;transform-origin:100% 0;transform:scaleX(0.9700);">5,00</span>
<span class="t" style="top:586px;font-size:12px;color:#444444;right:588.03px;transform-origin:100% 0;">312,45</span>
<span class="t" style="top:585px;font-size:12px;color:#ababab;left:939.38px;transform-origin:0 0;transform:scaleX(0.7919);">%</span>
<span class="t" style="top:585px;font-size:12px;color:#ababab;left:973.78px;transform-origin:0 0;transform:scaleX(1.0415);">сумма</span>
<span class="t" style="top:585px;font-size:12px;color:#444444;right:213.83px;transform-origin:100% 0;">5 936,55</span>
<span class="t" style="top:621px;font-size:12px;color:#444444;right:1368.08px;transform-origin:100% 0;">6</span>
<span class="t" style="top:621px;font-size:12px;color:#444444;left:126.74px;transform-origin:0 0;transform:scaleX(1.0111);">Корзина для хранения "ВЕЛЕТТА" , 21*11*5 см</span>
<span class="t" style="top:620px;font-size:12px;color:#444444;right:902.38px;transform-origin:100% 0;">4,000</span>
<span class="t" style="top:621px;font-size:12px;color:#444444;left:616.18px;transform-origin:0 0;transform:scaleX(1.0193);">шт</span>
<span class="t" style="top:620px;font-size:12px;color:#444444;right:736.18px;transform-origin:100% 0;">836,00</span>
<span class="t" style="top:621px;font-size:12px;color:#444444;right:650.59px;transform-origin:100% 0;transform:scaleX(0.9700);">5,00</span>
<span class="t" style="top:621px;font-size:12px;color:#444444;right:588.08px;transform-origin:100% 0;">167,20</span>
<span class="t" style="top:621px;font-size:12px;color:#444444;right:526.08px;transform-origin:100% 0;">50,00</span>
<span class="t" style="top:620px;font-size:12px;color:#444444;left:970.28px;transform-origin:0 0;transform:scaleX(0.9145);">1 672,…</span>
<span class="t" style="top:620px;font-size:12px;color:#444444;right:213.88px;transform-origin:100% 0;">1 504,80</span>
<span class="t" style="top:698px;font-size:13px;color:#808080;left:19.12px;transform-origin:0 0;transform:scaleX(1.0637);">Комментарий</span>
<span class="t" style="top:698px;font-size:13px;color:#4a4a4a;left:806.00px;transform-origin:0 0;transform:scaleX(0.9841);">Скидка руч., Σ:</span>
<span class="t" style="top:698px;font-size:13px;color:#3a3a3a;left:936.03px;transform-origin:0 0;transform:scaleX(0.9521);">1 672,00</span>
<span class="t" style="top:698px;font-size:13px;color:#4a4a4a;left:1037.78px;transform-origin:0 0;transform:scaleX(1.0068);">НДС:</span>
<span class="t" style="top:698px;font-size:13px;color:#4a4a4a;left:1163.32px;transform-origin:0 0;transform:scaleX(0.9362);">5 365,61</span>
<span class="t" style="top:698px;font-size:13px;color:#4a4a4a;left:1243.15px;transform-origin:0 0;transform:scaleX(1.0364);">Всего:</span>
<span class="t" style="top:698px;font-size:13px;color:#3a3a3a;left:1348.01px;transform-origin:0 0;transform:scaleX(0.9509);">32 193,60</span>
<span class="t" style="top:750px;font-size:13px;color:#1f1f1f;-webkit-text-stroke:0.25px #1f1f1f;left:988.77px;transform-origin:0 0;transform:scaleX(1.0128);">Провести и закрыть</span>
<span class="t" style="top:750px;font-size:13px;color:#1f1f1f;-webkit-text-stroke:0.25px #1f1f1f;left:1140.09px;transform-origin:0 0;transform:scaleX(1.0078);">Записать</span>
<span class="t" style="top:750px;font-size:13px;color:#1f1f1f;-webkit-text-stroke:0.25px #1f1f1f;left:1233.78px;transform-origin:0 0;transform:scaleX(1.0084);">Провести</span>
<span class="t" style="top:750px;font-size:13px;color:#7f7f7f;-webkit-text-stroke:0.2px #7f7f7f;left:1320.60px;transform-origin:0 0;transform:scaleX(0.9913);">Отменить проведение</span>
</body></html>
